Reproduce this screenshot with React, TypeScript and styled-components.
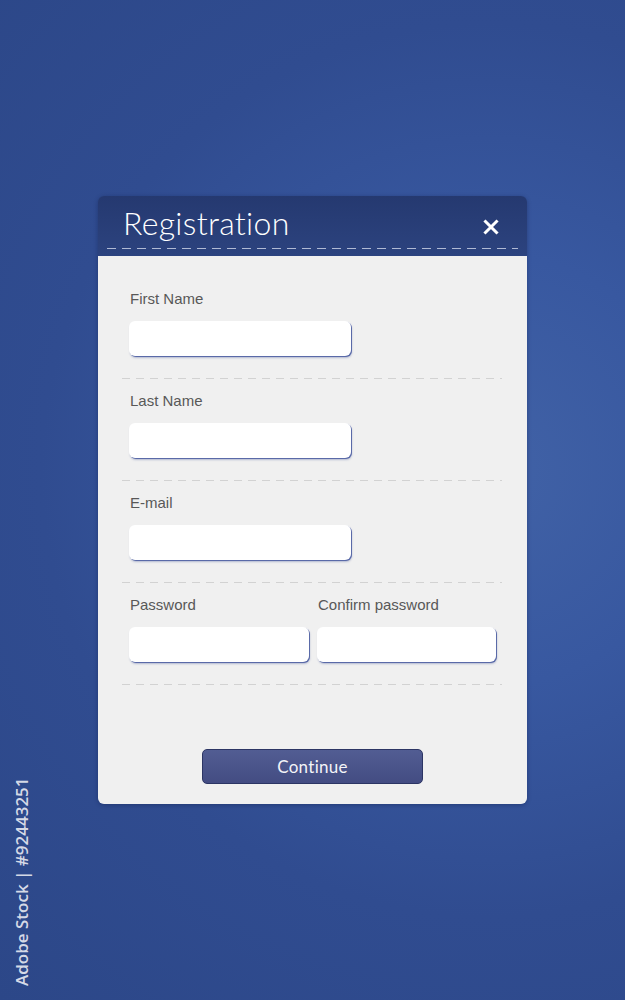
import React from 'react';
import styled, {createGlobalStyle} from 'styled-components';

const Global = createGlobalStyle`
    html, body {
        margin: 0;
        padding: 0;
    }
    body {
        font-family: "Liberation Sans", Arial, sans-serif;
    }
`;

const Page = styled.main`
    position: relative;
    width: 625px;
    height: 1000px;
    box-sizing: border-box;
    padding: 196px 0 0 98px;
    overflow: hidden;
    background: radial-gradient(circle at 78% 47%, #4162a6 0%, #3858a0 30%, #304c90 62%, #2c4788 100%);
`;

const Card = styled.section`
    width: 429px;
    border-radius: 6px;
    overflow: hidden;
    box-shadow: 0 1px 4px rgba(10, 20, 60, 0.35);
`;

const Header = styled.header`
    position: relative;
    height: 60px;
    box-sizing: border-box;
    padding: 8px 25px 0 25px;
    display: flex;
    justify-content: space-between;
    align-items: flex-start;
    background: linear-gradient(#253970, #2c437f);
`;

const Title = styled.h1`
    margin: 0;
    font-family: Lato, "Open Sans", sans-serif;
    font-weight: 300;
    font-size: 32px;
    line-height: 38px;
    color: #ffffff;
    letter-spacing: 0.3px;
`;

const Close = styled.button`
    border: 0;
    background: none;
    padding: 0;
    margin-top: 15px;
    margin-right: 3px;
    width: 16px;
    height: 16px;
    cursor: pointer;
`;

const Dashes = styled.div<{$color: string; $dash: number; $gap: number}>`
    height: 1px;
    background-image: repeating-linear-gradient(
        to right,
        ${p => p.$color} 0,
        ${p => p.$color} ${p => p.$dash}px,
        transparent ${p => p.$dash}px,
        transparent ${p => p.$dash + p.$gap}px
    );
`;

const HeaderRule = styled(Dashes)`
    position: absolute;
    left: 9px;
    right: 9px;
    top: 52px;
`;

const Body = styled.div`
    background: #f0f0f0;
    padding: 34px 25px 20px 24px;
`;

const Section = styled.div`
    display: flex;
    gap: 8px;
    padding: 0 0 22px 7px;
`;

const Field = styled.label<{$width: number}>`
    display: flex;
    flex-direction: column;
    gap: 14px;
    width: ${p => p.$width}px;
`;

const Label = styled.span`
    padding-left: 1px;
    font-size: 15px;
    line-height: 17px;
    color: #585858;
`;

const Input = styled.input`
    box-sizing: border-box;
    height: 35px;
    width: 100%;
    border: 0;
    border-radius: 6px;
    background: #ffffff;
    box-shadow: 1px 1px 0 #5a6aa8, 1px 2px 2px rgba(60, 80, 150, 0.35);
    outline: none;
`;

const Separator = styled(Dashes)`
    margin-bottom: 13px;
`;

const Footer = styled.div`
    display: flex;
    justify-content: center;
    padding-top: 51px;
    margin-right: -1px;
`;

const Button = styled.button`
    width: 221px;
    height: 35px;
    border: 1px solid #2c3564;
    border-radius: 5px;
    background: linear-gradient(#525d93, #434c82);
    color: #f4f4f8;
    font-family: Lato, "Open Sans", sans-serif;
    font-weight: 400;
    font-size: 17px;
    letter-spacing: 0.3px;
    cursor: pointer;
`;

const Credit = styled.div`
    position: absolute;
    left: 12px;
    bottom: 14px;
    transform-origin: left top;
    transform: rotate(-90deg);
    white-space: nowrap;
    font-family: "Open Sans", sans-serif;
    font-weight: 600;
    font-size: 17px;
    line-height: 20px;
    color: #d5d9e6;
    width: 210px;
    margin-bottom: -20px;
`;

function CloseIcon() {
    return (
        <svg width="16" height="16" viewBox="0 0 16 16">
            <path d="M2.5 2.5 L13.5 13.5 M13.5 2.5 L2.5 13.5" stroke="#ffffff" strokeWidth="3" strokeLinecap="square" />
        </svg>
    );
}

const fields: {label: string; type: string; width: number}[][] = [
    [{label: 'First Name', type: 'text', width: 222}],
    [{label: 'Last Name', type: 'text', width: 222}],
    [{label: 'E-mail', type: 'email', width: 222}],
    [
        {label: 'Password', type: 'password', width: 180},
        {label: 'Confirm password', type: 'password', width: 179},
    ],
];

export default function App() {
    return (
        <Page>
            <Global />
            <Card>
                <Header>
                    <Title>Registration</Title>
                    <Close aria-label="Close"><CloseIcon /></Close>
                    <HeaderRule $color="rgba(220, 226, 240, 0.75)" $dash={9} $gap={6} />
                </Header>
                <Body>
                    {fields.map((row, i) => (
                        <React.Fragment key={i}>
                            <Section>
                                {row.map(f => (
                                    <Field key={f.label} $width={f.width}>
                                        <Label>{f.label}</Label>
                                        <Input type={f.type} />
                                    </Field>
                                ))}
                            </Section>
                            <Separator $color="#d2d2d2" $dash={8} $gap={6} />
                        </React.Fragment>
                    ))}
                    <Footer>
                        <Button>Continue</Button>
                    </Footer>
                </Body>
            </Card>
            <Credit>Adobe Stock | #92443251</Credit>
        </Page>
    );
}
